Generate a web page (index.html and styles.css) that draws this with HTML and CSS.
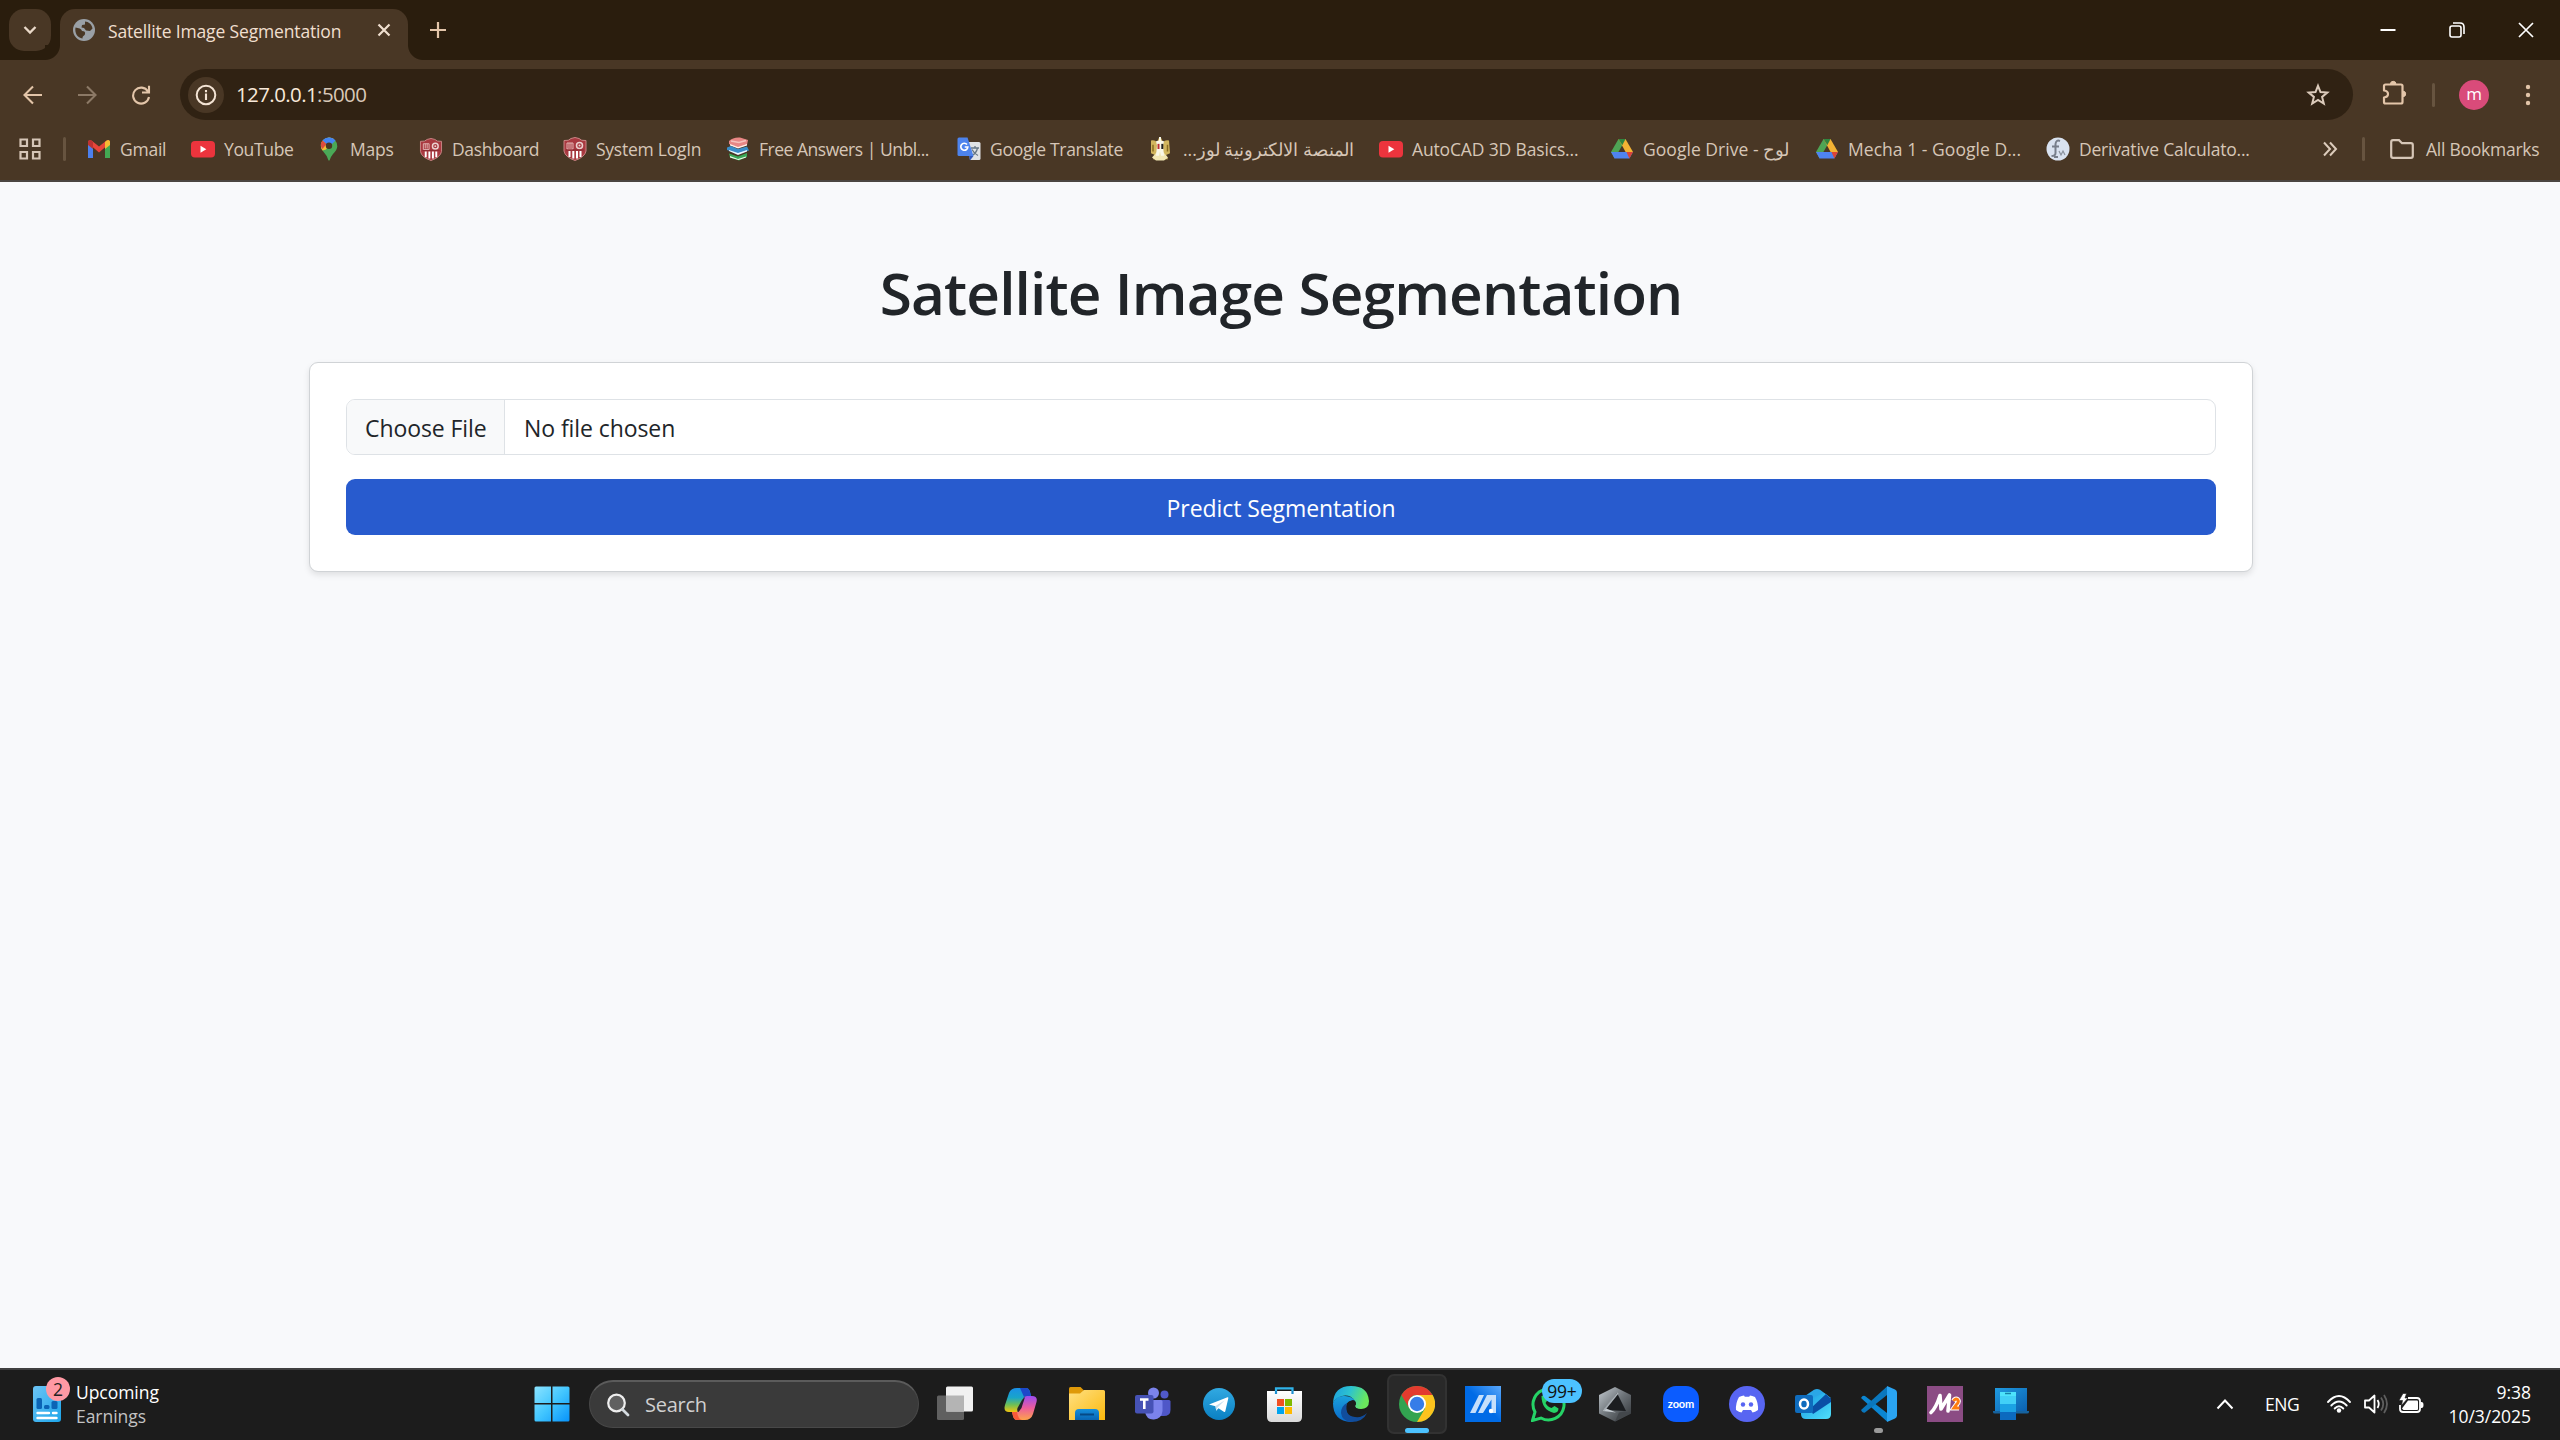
FILE: index.html
```html
<!DOCTYPE html>
<html lang="en">
<head>
<meta charset="utf-8">
<title>Satellite Image Segmentation</title>
<link rel="stylesheet" href="styles.css">
</head>
<body>
<svg class="defs" width="0" height="0" aria-hidden="true">
  <defs>
    <linearGradient id="gWin" x1="0" y1="0" x2="1" y2="1"><stop offset="0" stop-color="#8be3ff"/><stop offset=".5" stop-color="#42c6ff"/><stop offset="1" stop-color="#0793fb"/></linearGradient>
    <linearGradient id="gWidget" x1="0" y1="0" x2="1" y2="1"><stop offset="0" stop-color="#6cc4f5"/><stop offset="1" stop-color="#1ca5ea"/></linearGradient>
    <linearGradient id="gCopA" x1="0" y1="0" x2="0" y2="1"><stop offset="0" stop-color="#1a8fe8"/><stop offset=".4" stop-color="#19a5c9"/><stop offset=".7" stop-color="#6fbf55"/><stop offset="1" stop-color="#f2c50f"/></linearGradient>
    <linearGradient id="gCopB" x1="0" y1="0" x2="0" y2="1"><stop offset="0" stop-color="#9b4cf0"/><stop offset=".5" stop-color="#ed5d9c"/><stop offset="1" stop-color="#fda34a"/></linearGradient>
    <linearGradient id="gFolder" x1="0" y1="0" x2="1" y2="1"><stop offset="0" stop-color="#ffe083"/><stop offset="1" stop-color="#fbb90c"/></linearGradient>
    <linearGradient id="gFolderTab" x1="0" y1="0" x2="0" y2="1"><stop offset="0" stop-color="#158fdc"/><stop offset="1" stop-color="#0965b3"/></linearGradient>
    <linearGradient id="gTele" x1="0" y1="0" x2="0" y2="1"><stop offset="0" stop-color="#31a9e2"/><stop offset="1" stop-color="#0a80c2"/></linearGradient>
    <linearGradient id="gStore" x1="0" y1="0" x2="0" y2="1"><stop offset="0" stop-color="#ffffff"/><stop offset="1" stop-color="#dadada"/></linearGradient>
    <linearGradient id="gEdgeA" x1="0" y1="0" x2="1" y2=".3"><stop offset="0" stop-color="#1b9de2"/><stop offset=".5" stop-color="#2dc3cf"/><stop offset="1" stop-color="#6ae85c"/></linearGradient>
    <linearGradient id="gEdgeB" x1="0" y1="0" x2="0" y2="1"><stop offset="0" stop-color="#1ba0dc"/><stop offset="1" stop-color="#0968c8"/></linearGradient>
    <linearGradient id="gAsus" x1="0" y1="1" x2="1" y2="0"><stop offset=".5" stop-color="#006be6"/><stop offset="1" stop-color="#5aa8fa"/></linearGradient>
    <linearGradient id="gMetal" x1="0" y1="0" x2="1" y2="1"><stop offset="0" stop-color="#c4cbd1"/><stop offset=".5" stop-color="#6d7378"/><stop offset="1" stop-color="#2f3236"/></linearGradient>
    <linearGradient id="gOut" x1="0" y1="0" x2="1" y2="1"><stop offset="0" stop-color="#1697e0"/><stop offset="1" stop-color="#50e0fb"/></linearGradient>
    <linearGradient id="gLap" x1="0" y1="0" x2="1" y2="1"><stop offset="0" stop-color="#1f9ae0"/><stop offset="1" stop-color="#0b5fae"/></linearGradient>
    <symbol id="youtube" viewBox="0 0 24 24"><rect y="4" width="24" height="16.500" rx="4" fill="#ec343d"/><path d="M9.500 8.700v7l5.800-3.500z" fill="#fff"/></symbol>
    <symbol id="drive" viewBox="0 0 24 24"><path d="M8.500 2 1 15l3.600 6.500L12.300 8.300z" fill="#4ea455"/><path d="M8.500 2h7l7.500 13h-7.400z" fill="#f4b334"/><path d="M8.500 2h7l-3.200 6.300z" fill="#2f8540"/><path d="M1 15h22l-3.600 6.500h-14.800z" fill="#4f83f0"/><path d="M16.500 15H23l-3.600 6.500z" fill="#dc4437"/></symbol>
    <symbol id="crest" viewBox="0 0 24 24"><path d="M1 3.500Q6 4 8 1.500L12 .500l4 1Q18 4 23 3.500V14q-1 6-11 9.500Q2 20 1 14z" fill="#a93940" stroke="#c98585" stroke-width="1"/><path d="M4 6h6v6H4zM6 6v5M8 6v5" fill="none" stroke="#e2b4b2"/><circle cx="16.500" cy="8.500" r="3" fill="#a93940" stroke="#ecd2d0" stroke-width="1.500"/><circle cx="16.500" cy="8.500" r="1" fill="#ecd2d0"/><path d="M6.500 14v6M10.300 14v7.500M14 14v7.500M17.500 14v6" stroke="#fff" stroke-width="2"/><path d="M3 13h18" stroke="#8b2b32"/></symbol>
  </defs>
</svg>

<header class="browser">
  <div class="tabstrip">
    <button class="tab-search"><svg width="16" height="16" viewBox="0 0 16 16"><path d="m2.500 5 5.500 5.500L13.500 5" fill="none" stroke="#ead9c9" stroke-width="2.300"/></svg></button>
    <div class="tab">
      <svg class="favicon" width="22" height="22" viewBox="0 0 22 22"><circle cx="11" cy="11" r="11" fill="#9aa0a6"/><path d="M2.500 8.500c3 .5 6 1 6.500 3.500 2.500 0 3.500 1 3 3s-2.500 1.500-2.500 4.500C4.500 19 1.500 14 2.500 8.500zM12 2.500c3.500 0 7 3 7.500 7l-2.500 2.500-4-.5-2-2.500-2.500-.500.500-2.500 3-.500z" fill="#493725"/></svg>
      <span class="tab-title">Satellite Image Segmentation</span>
      <svg class="tab-close" width="14" height="14" viewBox="0 0 14 14"><path d="m1.500 1.500 11 11m0-11-11 11" stroke="#f0dfcf" stroke-width="2.200"/></svg>
    </div>
    <svg class="new-tab" width="18" height="18" viewBox="0 0 18 18"><path d="M9 1v16M1 9h16" stroke="#e3c5a9" stroke-width="2.200"/></svg>
    <div class="window-controls">
      <svg width="16" height="16" viewBox="0 0 16 16"><path d="M.500 8h15" stroke="#fff" stroke-width="2"/></svg>
      <svg width="16" height="16" viewBox="0 0 16 16"><rect x="1" y="4" width="11" height="11" rx="2" fill="none" stroke="#fff" stroke-width="1.600"/><path d="M4 1h7q4 0 4 4v7" fill="none" stroke="#fff" stroke-width="1.600"/></svg>
      <svg width="16" height="16" viewBox="0 0 16 16"><path d="m1 1 14 14m0-14L1 15" stroke="#fff" stroke-width="1.700"/></svg>
    </div>
  </div>
  <div class="toolbar">
    <div class="nav-buttons">
      <svg width="20" height="20" viewBox="0 0 20 20"><path d="M19 10H2.500M10 1.500 1.500 10l8.500 8.500" fill="none" stroke="#e3c5a9" stroke-width="2.100"/></svg>
      <svg width="20" height="20" viewBox="0 0 20 20"><path d="M1 10h16.500M10 1.500l8.500 8.500-8.500 8.500" fill="none" stroke="#8c7966" stroke-width="2.100"/></svg>
      <svg width="20" height="20" viewBox="0 0 20 20"><path d="M17 6.500A8 8 0 1 0 18 12M11 7.500h7V.800" fill="none" stroke="#e3c5a9" stroke-width="2.100"/></svg>
    </div>
    <div class="omnibox">
      <span class="site-info"><svg width="22" height="22" viewBox="0 0 22 22"><circle cx="11" cy="11" r="9.300" fill="none" stroke="#f3e3d4" stroke-width="2"/><path d="M11 9.500V16M11 6v2.200" stroke="#f3e3d4" stroke-width="2.100"/></svg></span>
      <span class="url">127.0.0.1<span class="port">:5000</span></span>
      <svg class="star" width="24" height="24" viewBox="0 0 24 24"><path d="m12 2.800 2.500 6.300 6.800.500-5.200 4.300 1.700 6.600-5.800-3.600-5.800 3.600 1.700-6.600-5.200-4.300 6.800-.500z" fill="none" stroke="#dccbbb" stroke-width="2"/></svg>
    </div>
    <div class="toolbar-actions">
      <svg class="extensions" width="26" height="26" viewBox="0 0 26 26"><path d="M4.500 4.500H20q1.500 0 1.500 1.500v16q0 1.500-1.500 1.500H4.500Q3 23.500 3 22v-4.500q4-.5 4-3.500t-4-3.500V6q0-1.500 1.500-1.500z" fill="none" stroke="#e3c5a9" stroke-width="2.200" stroke-linejoin="round"/><path d="M9.500 4a2.700 2.700 0 0 1 5.400 0zM22 11.200a2.700 2.700 0 0 1 0 5.400z" fill="#e3c5a9" stroke="#e3c5a9"/></svg>
      <i class="divider"></i>
      <span class="avatar">m</span>
      <svg class="kebab" width="6" height="22" viewBox="0 0 6 22"><g fill="#e3c5a9"><circle cx="3" cy="3" r="2.200"/><circle cx="3" cy="11" r="2.200"/><circle cx="3" cy="19" r="2.200"/></g></svg>
    </div>
  </div>
  <nav class="bookmarks">
    <svg class="apps" width="22" height="22" viewBox="0 0 22 22"><g fill="none" stroke="#d6c6b7" stroke-width="2.200"><path d="M1.500 1.500h6.500v6.500H1.500zM14 1.500h6.500v6.500H14zM1.500 14h6.500v6.500H1.500zM14 14h6.500v6.500H14z"/></g></svg>
    <i class="divider"></i>
    <a class="bookmark bm-gmail"><svg viewBox="0 0 24 24"><path d="M1 21V6l5 4v11z" fill="#4c80ee"/><path d="M23 21V6l-5 4v11z" fill="#43a853"/><path d="M1 6V4.500Q2.500 2.500 4.500 3.500L12 9.500l7.500-6Q21.500 2.500 23 4.500V6L12 15.500z" fill="#e8453a"/><path d="M18 5q3.500-3.500 5-.500V8l-5 4z" fill="#f6bb33"/><path d="M1 8V4.500q1.500-3 5 .500v7z" fill="#bd3332"/></svg>Gmail</a>
    <a class="bookmark bm-youtube"><svg><use href="#youtube"/></svg>YouTube</a>
    <a class="bookmark bm-maps"><svg viewBox="0 0 24 24"><path d="M12 .500a8.500 8.500 0 0 1 8.300 9Q20 13 16 17q-2.500 3-3.500 6.500h-1Q10.500 19 7 15.500q-3.300-3.500-3.300-6.500A8.500 8.500 0 0 1 12 .500z" fill="#4aa957"/><path d="M4 7q1-5 8-6.500 3 0 5 1.500L9 12.500l-3.500 1Q3.500 11 4 7z" fill="#f3bd35"/><path d="M5.500 3.500Q8 .500 12 .500q4 0 6.500 3L12 10z" fill="#4485f3"/><path d="m5.500 3.500 4 3.500-4 5q-3.500-4 0-8.500z" fill="#dd4b3e"/><circle cx="12" cy="8.800" r="3.200" fill="#493725"/></svg>Maps</a>
    <a class="bookmark bm-dashboard"><svg class="small"><use href="#crest"/></svg>Dashboard</a>
    <a class="bookmark bm-login"><svg><use href="#crest"/></svg>System LogIn</a>
    <a class="bookmark bm-answers"><svg viewBox="0 0 24 24"><path d="M3 4Q7 0 14 .500L22 3l-1 5-9 3-9-4z" fill="#e88785"/><path d="m5 4 8 1.500 7-2" stroke="#f6c3bd" fill="none" stroke-width="1.500"/><path d="m4 7 8 3 9-3v1.500l-9 3-8-3z" fill="#fff0e9"/><path d="M1 10.500 5 9l7 3 9-2.500 2 4L12 17 1 13z" fill="#3a8dc8"/><path d="m3 13 9 3 9-3v1.500l-9 3.500-9-4z" fill="#eaf7ff"/><path d="m3 16.500 9 3 9-3.500v4l-8 3.500-9-3z" fill="#3aa857"/><path d="m4 19 8 3 8-2.500v1l-7.500 2.500L4 20.500z" fill="#eefbea"/></svg>Free Answers | Unbl...</a>
    <a class="bookmark bm-translate"><svg viewBox="0 0 24 24"><path d="M10 5h12q1.500 0 1.500 1.500v15q0 1.500-1.500 1.500h-9z" fill="#dfe2e5"/><path d="M14 11h8M18 9v2m2.500 0q-1 5-5.500 7.500m0-6q2 4 6 6" fill="none" stroke="#667786" stroke-width="1.300"/><path d="M2 .500h8.500L16.500 19H2Q.500 19 .500 17.500V2Q.500.500 2 .500z" fill="#4d83ed"/><path d="M12 19h4.500L13 23.500z" fill="#3058ba"/><path d="M10 7.500A3.500 3.500 0 1 0 10.800 10H7.700" fill="none" stroke="#fff" stroke-width="1.700"/></svg>Google Translate</a>
    <a class="bookmark bm-arabic"><svg viewBox="0 0 24 28" preserveAspectRatio="none"><path d="M3 4q4-1 6 2l2-5h2l2 5q2-3 6-2l1 15-4 2 2 5H5l2-5-4-2z" fill="#d2b65e"/><path d="m8 27.500-4-3.500 6-8h4l6 8-4 3.500z" fill="#f2e7b4"/><path d="m8 5 3-1V0h2v4l3 1-1 5 1 12h-3l-1-5-1 5H8l1-12z" fill="#faf8e8"/><path d="M9.500 8h2v6h-2z" fill="#bb3033"/><path d="M13.300 8h2v6h-2z" fill="#222"/><path d="M5 9v8M19.500 9v8" stroke="#8a6d22" stroke-width="1.500"/></svg><span dir="rtl">المنصة الالكترونية لوز...</span></a>
    <a class="bookmark bm-autocad"><svg><use href="#youtube"/></svg>AutoCAD 3D Basics...</a>
    <a class="bookmark bm-drive"><svg><use href="#drive"/></svg>Google Drive - لوح</a>
    <a class="bookmark bm-mecha"><svg><use href="#drive"/></svg>Mecha 1 - Google D...</a>
    <a class="bookmark bm-derivative"><svg viewBox="0 0 24 24"><circle cx="12" cy="12" r="11.500" fill="#d9e2f0"/><path d="M14 4q-4-1.500-4.500 3v9q0 3-4 3M6 9.500h7M8 20h4" fill="none" stroke="#777e8b" stroke-width="2"/><path d="m13 14 2 4 2-4 2 4" fill="none" stroke="#8a919d" stroke-width="1.200"/></svg>Derivative Calculato...</a>
    <div class="bookmarks-end">
      <svg class="more" width="15" height="18" viewBox="0 0 15 18"><path d="m1 2.500 6 6.500-6 6.500m6-13L13 9l-6 6.500" fill="none" stroke="#dccbbb" stroke-width="2"/></svg>
      <i class="divider"></i>
      <svg class="folder" width="24" height="20" viewBox="0 0 24 20"><path d="M1.200 3q0-1.800 1.800-1.800h6l3 3h9q1.800 0 1.800 1.800v11q0 1.800-1.800 1.800H3q-1.800 0-1.800-1.800z" fill="none" stroke="#d6c6b7" stroke-width="2.200"/></svg>
      <span>All Bookmarks</span>
    </div>
  </nav>
</header>

<main class="page">
  <div class="container">
    <h1 class="heading">Satellite Image Segmentation</h1>
    <form class="card">
      <label class="file-input"><span class="file-button">Choose File</span><span class="file-name">No file chosen</span></label>
      <button class="submit" type="button"><span>Predict Segmentation</span></button>
    </form>
  </div>
</main>

<footer class="taskbar">
  <div class="widget">
    <div class="widget-icon">
      <svg width="28" height="36" viewBox="0 0 28 36"><rect width="28" height="36" rx="3" fill="url(#gWidget)"/><g fill="#0b64b5"><rect x="3.500" y="12" width="5.500" height="11" rx="1.500"/><rect x="11" y="19" width="5.500" height="4" rx="1.500"/><rect x="18.500" y="15" width="6" height="8" rx="1.500"/></g><path d="M4.500 27h11.500m4 0h3.500M4.500 32h19" stroke="#fff" stroke-width="2.400" stroke-linecap="round"/></svg>
      <span class="widget-badge">2</span>
    </div>
    <div class="widget-text"><span>Upcoming</span><span class="muted">Earnings</span></div>
  </div>
  <svg class="start" width="36" height="36" viewBox="0 0 36 36"><path d="M2 .500h15v16.500H.500V2Q.500.500 2 .500zM18.500.500H34q1.500 0 1.500 1.500v15h-17zM.500 18.500H17v17H2q-1.500 0-1.500-1.500zM18.500 18.500h17V34q0 1.500-1.500 1.500H18.500z" fill="url(#gWin)"/></svg>
  <div class="search">
    <svg width="24" height="24" viewBox="0 0 24 24"><circle cx="10.500" cy="10" r="8.300" fill="#606060" stroke="#eee" stroke-width="2.200"/><path d="m16.500 16.500 5.500 5.500" stroke="#d5dbe0" stroke-width="2.800" stroke-linecap="round"/></svg>
    <span>Search</span>
  </div>
  <div class="apps-row">
    <div class="app"><svg viewBox="0 0 36 36"><rect y="9.500" width="27" height="24.500" rx="1.500" fill="#606060"/><rect x="9" y=".500" width="27" height="25" rx="1.500" fill="#f1f1f1"/><path d="M9 9.500h18v16H9z" fill="#b4b4b4"/></svg></div>
    <div class="app"><svg viewBox="0 0 36 36"><path d="M14 2h9q3 0 4 4l1 4h-4q-3 0-4 3l-3 9q-1 4-4 4H6q-6 0-4-7L6 7q2-5 8-5z" fill="url(#gCopA)"/><path d="M17 2h6q3 0 4 4l1 4h-4q-2 0-3 1z" fill="#1c48c9"/><path d="M22 34h-8q-3 0-4-4l-1-4h4q3 0 4-3l3-9q1-4 4-4h5q6 0 4.500 6L30 28q-2 6-8 6z" fill="url(#gCopB)"/><path d="M19 34h-5q-3 0-4-4l-1-4h5q1 7 5 8z" fill="#f65a3a"/><path d="m19 14 3-3-3.500 11-3 4q-2-1-1-4z" fill="#24232a"/></svg></div>
    <div class="app"><svg viewBox="0 0 36 36"><path d="M0 2.500q0-1.500 1.500-1.500h10l3.500 3.500V9H0z" fill="#df9909"/><path d="M0 7.500h11l4-3.500h19.500Q36 4 36 5.500V34H0z" fill="url(#gFolder)"/><path d="M6 34V27q0-4 4-4h16q4 0 4 4v7z" fill="url(#gFolderTab)"/><path d="M11 28.500h14" stroke="#064985" stroke-width="2"/></svg></div>
    <div class="app"><svg viewBox="0 0 36 36"><circle cx="29.500" cy="8.500" r="4" fill="#5059c9"/><path d="M24 14h10q1.500 0 1.500 1.500V24q0 6-7 6h-5z" fill="#4f57c8"/><circle cx="18.500" cy="7" r="5.500" fill="#7b83eb"/><path d="M10 14h16q1.500 0 1.500 1.500V25q-1 8-8.500 8.500T10 26z" fill="#7b83eb"/><rect y="9" width="18.500" height="18.500" rx="2" fill="#4652b5"/><path d="M5 13.500h8.500M9.300 13.500V23" stroke="#fff" stroke-width="2.600"/></svg></div>
    <div class="app"><svg viewBox="0 0 36 36"><circle cx="18" cy="18" r="16" fill="url(#gTele)"/><path d="m8 18.500 18.500-7.200q1-.3.800 1l-3 13q-.3 1.200-1.500.5l-5.300-3.600-2.300 2.600-.7-4.500z" fill="#fff"/><path d="m14.500 20 9-5.500-7 7-1.300 3.300z" fill="#c3dff0"/></svg></div>
    <div class="app"><svg viewBox="0 0 36 36"><path d="M9 8V2.300h16.500V8" fill="none" stroke="#2fb3ea" stroke-width="2.200"/><path d="M0 5h35v26q0 5-5 5H5q-5 0-5-5z" fill="url(#gStore)"/><path d="M9 8V5M25.500 8V5" stroke="#1d8fd0" stroke-width="2.200"/><path d="M10 13h7v7h-7z" fill="#f25022"/><path d="M18 13h7v7h-7z" fill="#7fba00"/><path d="M10 21h7v7h-7z" fill="#00a4ef"/><path d="M18 21h7v7h-7z" fill="#ffb900"/></svg></div>
    <div class="app"><svg viewBox="0 0 36 36"><path d="M0 17Q1 0 18 0t18 15q0 8-8 8-6 0-6-3 2-2 0-5-5-7-13-5-7 2-9 7z" fill="url(#gEdgeA)"/><path d="M0 17q3-8 12-7 8 .5 10 5-8-1-9 5-1 9 8 15l-3 1Q0 35 0 17z" fill="url(#gEdgeB)"/><path d="M14 17q-3 13 8 14 7 1 12-4-4 9-16 9-9-1-10-9 0-7 6-10z" fill="#114d9c"/><path d="M14 19q1-4 6-5 4 1 2 6 1 4 8 3 2 0 4-1-4 5-10 5-8-1-10-8z" fill="#1c1c1c"/></svg></div>
    <div class="app active"><svg viewBox="0 0 36 36"><circle cx="18" cy="18" r="18" fill="#32a350"/><path d="M18 9h15.600A18 18 0 0 1 18 36l8-13.500z" fill="#fcc31e"/><path d="M2.400 9A18 18 0 0 1 33.600 9H18a9 9 0 0 0-7.800 13.500z" fill="#e33b2e"/><circle cx="18" cy="18" r="9" fill="#fff"/><circle cx="18" cy="18" r="7.200" fill="#367de8"/></svg></div>
    <div class="app"><svg viewBox="0 0 36 36"><path d="M0 0h36v36H0z" fill="url(#gAsus)"/><path d="M5 27 14 9h5l-8.500 18zM13 27 22 9h9v18h-4.500V13.500L18 27z" fill="#c5dffb"/><circle cx="26" cy="25" r="2.200" fill="#fff"/></svg></div>
    <div class="app"><svg viewBox="0 0 36 36"><path d="M1.500 34.500 4 26A15.500 15.500 0 1 1 10 32z" fill="none" stroke="#25d366" stroke-width="3"/><path d="m10.500 10 3-1 3 5-2 3q2 4 6 5l3-2 4 2.500q0 4-4.500 4.500Q10.500 24 10.500 10z" fill="#25d366"/></svg><span class="count">99+</span></div>
    <div class="app"><svg viewBox="0 0 36 36"><path d="m18 1 16 8v18.500L18 35.500 2 27.500V9z" fill="url(#gMetal)"/><path d="m20 7 9 18-11-.5-10-1z" fill="#1b1d20"/><path d="M20 5 6 25l13 1.500L8 22z" fill="#c5ccd2"/><path d="M7 24.500 21 7" stroke="#a8afb5" stroke-width="1.500"/><path d="m18 35.500 4-9 6-1 6 2z" fill="#43474b"/></svg></div>
    <div class="app"><svg viewBox="0 0 36 36"><rect width="36" height="36" rx="13" fill="#0b5cff"/></svg><span class="zoom-word">zoom</span></div>
    <div class="app"><svg viewBox="0 0 36 36"><circle cx="18" cy="18" r="18" fill="#5865f2"/><path d="M10 11q3-1.500 5-1.600l.8 1.400h4.400l.8-1.400q2 .1 5 1.600 3.500 6 3 13-3 2-5.500 2.500L22 24h-8l-1.500 2.500Q10 26 7 24q-.5-7 3-13z" fill="#fff"/><circle cx="14" cy="18.500" r="2.200" fill="#5865f2"/><circle cx="22" cy="18.500" r="2.200" fill="#5865f2"/></svg></div>
    <div class="app"><svg viewBox="0 0 36 36"><path d="m7 12 12-8.300q3-1.500 6 0L36 12l-18 9z" fill="#2aa7e6"/><path d="M6 17 29 7q7 4 7 9v12q0 5-5 5H11q-5 0-5-5z" fill="url(#gOut)"/><path d="M15 23 31 8l5 5v3L18 28z" fill="#0a4fa5"/><rect y="9" width="18" height="18" rx="2" fill="#0f6cbd"/><ellipse cx="9" cy="18" rx="4" ry="4.600" fill="none" stroke="#fff" stroke-width="2.500"/></svg></div>
    <div class="app running"><svg viewBox="0 0 36 36"><path d="M0 12q1.500-3 4-2l22 17v8.500z" fill="#0b86d2"/><path d="m0 24 26-23.500V9L4 26.500q-2.500 1-4-2.500z" fill="#0a77bd"/><path d="m26 0 8 3.500q2 1 2 3v23q0 2-2 3L26 36z" fill="#2aa4f2"/></svg></div>
    <div class="app"><svg viewBox="0 0 36 36"><path d="M0 0h36v36H0z" fill="#8b4c84"/><path d="M4 26.500Q9 22 13 9.500l1 13.500L22.500 9 21 25" fill="none" stroke="#fff" stroke-width="3.600" stroke-linecap="round" stroke-linejoin="round"/><path d="M26.500 15q2-3 4-1.500 2 2-1 5l-2.500 3.500h5" fill="none" stroke="#fff" stroke-width="5"/><path d="M26.500 15q2-3 4-1.500 2 2-1 5l-2.500 3.500h5.500" fill="none" stroke="#ff7d10" stroke-width="3"/></svg></div>
    <div class="app"><svg viewBox="0 0 36 36"><path d="M2 2h32v24H2z" fill="url(#gLap)"/><path d="M0 25h36v1q0 1.500-2 1.500H2Q0 27.500 0 26z" fill="#16639f"/><rect x="7" y="6" width="16" height="28" rx="1.500" fill="#1ba2e4"/><path d="M7 10h16v8H7z" fill="#41d0f7"/><rect x="7" y="6" width="16" height="4" fill="#4de3fc"/><path d="M7 26h16v8H7z" fill="#0c6abf"/><path d="M12 7.500h6" stroke="#1583aa" stroke-width="1.500"/></svg></div>
  </div>
  <div class="tray">
    <svg class="chevron" width="18" height="12" viewBox="0 0 18 12"><path d="m1.500 10.500 7.500-8 7.500 8" fill="none" stroke="#fff" stroke-width="2"/></svg>
    <span class="lang">ENG</span>
    <svg class="wifi" width="26" height="20" viewBox="0 0 26 20"><g fill="none" stroke="#fff" stroke-width="1.900" stroke-linecap="round"><path d="M2 8q11-12 22 0M5.300 11.500q7.700-8 15.400 0M8.700 14.500q4.300-4.500 8.600 0"/></g><circle cx="13" cy="16.500" r="2.200" fill="#fff"/></svg>
    <svg class="volume" width="26" height="22" viewBox="0 0 26 22"><path d="M2 7.500h4L11.500 2.500v17L6 14.500H2z" fill="none" stroke="#fff" stroke-width="1.800" stroke-linejoin="round"/><path d="M14.500 7q2.500 4 0 8" fill="none" stroke="#fff" stroke-width="1.800"/><path d="M18 4.500q4.500 6.500 0 13M21 2q6 9 0 18" fill="none" stroke="#5e5e5e" stroke-width="1.800"/></svg>
    <svg class="battery" width="26" height="22" viewBox="0 0 26 22"><path d="M10 5h9q3 0 3 3v8q0 3-3 3H5q-3 0-3-3v-4" fill="none" stroke="#fff" stroke-width="1.800"/><path d="M22.500 9h1q2 0 2 3t-2 3h-1z" fill="#fff"/><path d="M10 7.500h9q1 0 1 1V16q0 1-1 1H5.500L4 15.500z" fill="#fff"/><path d="M5 .500h3.500L7 5h3L3.500 12.500l1-5H1z" fill="#fff" stroke="#1c1c1c" stroke-width=".6"/></svg>
    <div class="clock"><span>9:38</span><span>10/3/2025</span></div>
  </div>
</footer>
</body>
</html>
```
FILE: styles.css
```css
* { box-sizing: border-box; }

body {
  margin: 0;
  width: 2560px;
  height: 1440px;
  display: flex;
  flex-direction: column;
  overflow: hidden;
  background: #f8f9fb;
  font: 17.5px/24px "Open Sans", "Noto Sans", sans-serif;
  letter-spacing: -0.25px;
  white-space: nowrap;
}

svg { display: block; flex: none; }
.defs { position: absolute; }
button { border: 0; padding: 0; font: inherit; letter-spacing: inherit; }

/* Browser chrome */
.browser {
  flex: none;
  height: 182px;
  background: #493725;
  border-bottom: 2px solid #4b4541;
  color: #d6c6b7;
}

.tabstrip {
  height: 60px;
  display: flex;
  align-items: flex-end;
  padding-left: 9px;
  background: #2a1d0d;
}
.tab-search {
  width: 42px;
  height: 42px;
  margin: 0 9px 9px 0;
  border-radius: 15px;
  display: grid;
  place-items: center;
  background: #493725;
}
.tab {
  position: relative;
  width: 348px;
  height: 51px;
  padding: 0 17px 9px 13px;
  border-radius: 15px 15px 0 0;
  display: flex;
  align-items: center;
  background: #493725;
  color: #f0dfcf;
}
.tab::before, .tab::after {
  content: "";
  position: absolute;
  bottom: 0;
  width: 15px;
  height: 15px;
}
.tab::before { left: -15px; background: radial-gradient(circle at 0 0, #2a1d0d 14.5px, #493725 15.5px); }
.tab::after { right: -15px; background: radial-gradient(circle at 100% 0, #2a1d0d 14.5px, #493725 15.5px); }
.tab-title { margin-left: 13px; padding-top: 2px; letter-spacing: -0.15px; }
.tab-close { margin-left: auto; }
.new-tab { margin: 0 0 21px 21px; }
.window-controls {
  margin: 0 26px 22px auto;
  display: flex;
  gap: 53px;
}

.toolbar {
  height: 66px;
  padding-top: 9px;
  display: flex;
  align-items: flex-start;
}
.nav-buttons {
  height: 51px;
  width: 180px;
  padding-left: 23px;
  display: flex;
  align-items: center;
  gap: 34px;
}
.omnibox {
  width: 2173px;
  height: 51px;
  padding: 0 23px 0 8px;
  border-radius: 26px;
  display: flex;
  align-items: center;
  background: #302213;
}
.site-info {
  width: 36px;
  height: 36px;
  border-radius: 50%;
  display: grid;
  place-items: center;
  background: #493725;
}
.url { margin: -2px 0 0 12px; font-size: 20.5px; letter-spacing: -0.6px; color: #f8e9da; }
.port { color: #d9c9b9; }
.star { margin-left: auto; }
.toolbar-actions { flex: 1; height: 51px; display: flex; align-items: center; }
.extensions { margin-left: 28px; margin-top: -3px; }
.divider { flex: none; width: 3px; height: 24px; border-radius: 2px; background: #675440; }
.toolbar-actions .divider { margin-left: 25px; }
.avatar {
  width: 30px;
  height: 30px;
  margin-left: 24px;
  border-radius: 50%;
  background: #d94b7a;
  color: #fff;
  font-size: 17px;
  line-height: 27px;
  text-align: center;
}
.kebab { margin-left: 36px; }

.bookmarks {
  height: 54px;
  padding-bottom: 8px;
  display: flex;
  align-items: center;
}
.apps { margin-left: 19px; }
.bookmarks > .divider { margin: 0 21px 0 22px; }
.bookmark { flex: none; display: flex; align-items: center; gap: 9px; }
.bookmark svg { width: 24px; height: 24px; }
.bookmark .small { height: 23px; }
.bm-gmail { width: 104px; }
.bm-youtube { width: 126px; letter-spacing: -0.35px; }
.bm-maps { width: 102px; }
.bm-dashboard { width: 144px; letter-spacing: -0.35px; }
.bm-login { width: 163px; }
.bm-answers { width: 231px; letter-spacing: -0.48px; }
.bm-translate { width: 191px; letter-spacing: -0.3px; }
.bm-arabic { width: 231px; gap: 11px; }
.bm-autocad { width: 231px; letter-spacing: -0.15px; }
.bm-drive { width: 205px; letter-spacing: 0.04px; }
.bm-mecha { width: 231px; letter-spacing: 0.04px; }
.bm-derivative { width: 204px; letter-spacing: -0.2px; }
.bookmarks-end { flex: 1; display: flex; align-items: center; }
.more { margin-left: 73px; }
.bookmarks-end .divider { margin-left: 24px; }
.folder { margin: 0 12px 0 25px; }

/* Page */
.page { flex: 1; padding-top: 72px; }
.container { width: 1944px; margin: 0 0 0 309px; }
.heading {
  height: 72px;
  margin: 0 0 36px;
  padding-top: 2px;
  font-size: 58.5px;
  line-height: 72px;
  font-weight: 600;
  letter-spacing: -0.88px;
  text-align: center;
  color: #212529;
}
.card {
  height: 210px;
  padding: 36px;
  border: 1px solid #d0d3d6;
  border-radius: 9px;
  display: flex;
  flex-direction: column;
  gap: 24px;
  background: #fff;
  box-shadow: 0 3px 6px rgba(0, 0, 0, .1);
  color: #212529;
  font-size: 23px;
  letter-spacing: -0.08px;
}
.file-input {
  height: 56px;
  border: 1px solid #dee2e6;
  border-radius: 9px;
  display: flex;
  align-items: stretch;
  line-height: 57px;
  overflow: hidden;
}
.file-button {
  width: 158px;
  padding-left: 18px;
  border-right: 1px solid #dee2e6;
  background: #f8f9fa;
}
.file-name { padding-left: 19px; }
.submit {
  height: 56px;
  padding-top: 2px;
  border-radius: 9px;
  background: #285bce;
  color: #fff;
}

/* Taskbar */
.taskbar {
  flex: none;
  height: 72px;
  padding-bottom: 2px;
  border-top: 2px solid #404040;
  background: #1c1c1c;
  color: #fff;
  display: flex;
  align-items: center;
}
.widget { width: 534px; padding-left: 33px; display: flex; align-items: center; gap: 15px; }
.widget-icon { position: relative; }
.widget-badge {
  position: absolute;
  left: 13px;
  top: -9px;
  width: 24px;
  height: 24px;
  border-radius: 50%;
  background: #ff99a4;
  color: #222;
  text-align: center;
}
.widget-text { display: flex; flex-direction: column; letter-spacing: -0.05px; }
.muted { color: #c3c3c3; }
.search {
  width: 330px;
  height: 48px;
  margin: 0 3px 0 19px;
  padding-left: 16px;
  border: 1px solid #484848;
  border-top: 2px solid #5b5b5b;
  border-radius: 24px;
  display: flex;
  align-items: center;
  gap: 15px;
  background: #3a3a3a;
  color: #d0d0d0;
  font-size: 20px;
}
.apps-row { display: grid; grid-template-columns: repeat(17, 66px); }
.app { position: relative; height: 60px; display: grid; place-items: center; }
.app svg { width: 36px; height: 36px; }
.active::before {
  content: "";
  position: absolute;
  inset: 0 3px;
  border: 2px solid #323232;
  border-radius: 7px;
  background: #292929;
}
.active svg { position: relative; }
.active::after, .running::after {
  content: "";
  position: absolute;
  bottom: 1px;
  left: 21px;
  width: 24px;
  height: 5px;
  border-radius: 3px;
  background: #4cc2ff;
}
.running::after { left: 28px; width: 9px; background: #9a9a9a; }
.count {
  position: absolute;
  left: 26px;
  top: 5px;
  width: 40px;
  height: 24px;
  border-radius: 12px;
  background: #4cc2ff;
  color: #111;
  text-align: center;
}
.zoom-word {
  position: absolute;
  font: 700 11px/12px Lato, sans-serif;
  letter-spacing: -0.1px;
}
.tray { flex: 1; display: flex; align-items: center; padding-right: 29px; }
.chevron { margin-left: 172px; }
.lang { width: 38px; margin-left: 31px; letter-spacing: -0.5px; }
.wifi { margin-left: 23px; }
.volume { margin-left: 11px; }
.battery { margin-left: 9px; }
.clock { margin-left: auto; display: flex; flex-direction: column; text-align: right; letter-spacing: -0.05px; }
```
